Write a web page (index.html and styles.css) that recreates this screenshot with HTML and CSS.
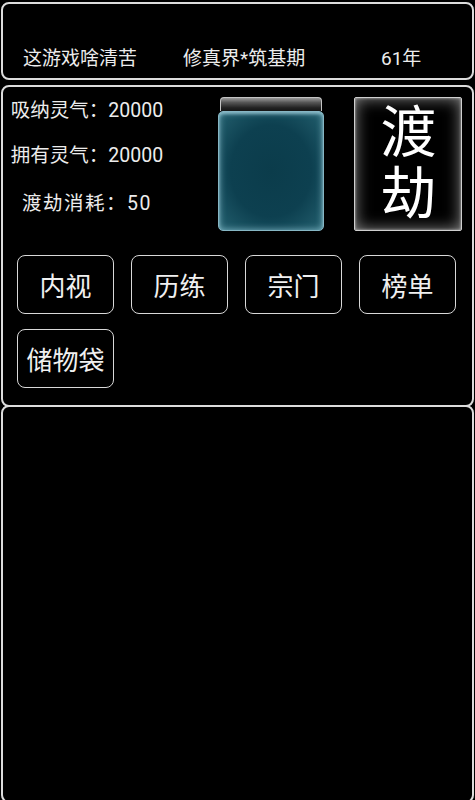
FILE: index.html
```
<!DOCTYPE html>
<html lang="zh">
<head>
<meta charset="utf-8">
<title>修真界</title>
<link rel="stylesheet" href="styles.css">
</head>
<body>
<div class="screen">
  <header class="panel topbar">
    <div class="cell">这游戏啥清苦</div>
    <div class="cell">修真界*筑基期</div>
    <div class="cell">61年</div>
  </header>
  <section class="panel main">
    <div class="top-row">
      <div class="stats">
        <div class="stat s1">吸纳灵气：20000</div>
        <div class="stat s2">拥有灵气：20000</div>
        <div class="stat s3">渡劫消耗：50</div>
      </div>
      <div class="vessel">
        <div class="vessel-cap"></div>
        <div class="vessel-glass"></div>
      </div>
      <div class="tribulation"><span class="tri-text">渡劫</span></div>
    </div>
    <div class="actions">
      <div class="btn">内视</div>
      <div class="btn">历练</div>
      <div class="btn">宗门</div>
      <div class="btn">榜单</div>
      <div class="btn">储物袋</div>
    </div>
  </section>
  <section class="panel log"></section>
</div>
</body>
</html>
```
FILE: styles.css
```
html, body {
  margin: 0;
  padding: 0;
  background: #000;
  overflow: hidden;
}
body {
  width: 475px;
  height: 800px;
  font-family: Roboto, "Noto Sans CJK SC", sans-serif;
  color: #ececec;
}
.screen {
  display: flex;
  flex-direction: column;
  padding: 2px 1px 0 1px;
  height: 800px;
  box-sizing: border-box;
}
.panel {
  border: 2px solid #dcdcdc;
  border-radius: 8px;
  box-sizing: border-box;
}
.topbar {
  height: 78px;
  display: grid;
  grid-template-columns: 160px 198px auto;
  align-items: end;
  padding: 0 4px 6px 20px;
  font-size: 19px;
  line-height: 26px;
  white-space: nowrap;
}
.main {
  margin-top: 5px;
  height: 322px;
  padding: 9px 10px 0 14px;
}
.top-row {
  display: flex;
  align-items: flex-start;
}
.stats {
  width: 170px;
  margin-left: -15px;
  margin-top: 2px;
  display: flex;
  flex-direction: column;
  align-items: center;
  font-size: 19.5px;
  line-height: 26px;
}
.stat.s2 { margin-top: 19px; }
.stat.s3 { margin-top: 22px; letter-spacing: 1.5px; }
.vessel {
  width: 106px;
  height: 134px;
  margin-left: 46px;
  margin-top: 1px;
  display: flex;
  flex-direction: column;
}
.vessel-cap {
  height: 13px;
  margin: 0 2px;
  border: 1px solid #c4c4c4;
  border-bottom: none;
  border-radius: 4px 4px 0 0;
  background: linear-gradient(#9a9a9a 0%, #555 35%, #222 75%, #151515 100%);
}
.vessel-glass {
  flex: 1;
  border: 1px solid #86b6c4;
  border-radius: 5px;
  background: radial-gradient(ellipse at 50% 50%, #0b3c4b 0%, #0d4050 55%, #24606f 100%);
  box-shadow: inset 0 0 7px rgba(160, 215, 230, 0.75), inset 0 2px 3px rgba(200, 235, 245, 0.5);
}
.tribulation {
  width: 108px;
  height: 134px;
  margin-left: 30px;
  margin-top: 1px;
  box-sizing: border-box;
  border: 1px solid #cfcfcf;
  border-radius: 2px;
  background: #000;
  box-shadow: inset 0 0 16px rgba(255, 255, 255, 0.55), inset 0 0 3px rgba(255, 255, 255, 0.6);
  display: flex;
  align-items: center;
  justify-content: center;
  padding-bottom: 1px;
}
.tri-text {
  writing-mode: vertical-rl;
  text-orientation: upright;
  font-family: "Noto Sans CJK SC", sans-serif;
  font-size: 56px;
  line-height: 56px;
  letter-spacing: 5px;
  color: #fff;
}
.actions {
  margin-top: 24px;
  display: grid;
  grid-template-columns: repeat(4, 97px);
  column-gap: 17px;
  row-gap: 15px;
}
.btn {
  height: 59px;
  box-sizing: border-box;
  border: 1.5px solid #d8d8d8;
  border-radius: 8px;
  display: flex;
  align-items: center;
  justify-content: center;
  font-size: 26px;
  color: #f0f0f0;
}
.log {
  margin-top: -2px;
  flex: 1;
  margin-bottom: -3px;
}
```
